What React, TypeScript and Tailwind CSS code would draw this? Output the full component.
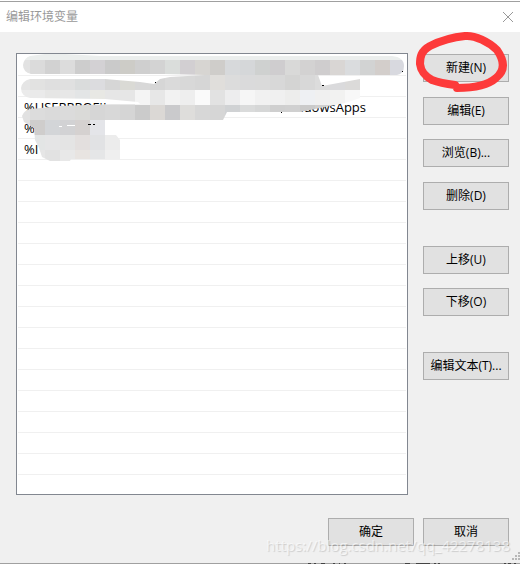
import React from 'react';
import { clsx } from 'clsx';

const uiFont = "font-['Open_Sans','Noto_Sans_CJK_SC',sans-serif]";

const rows = [
  { start: '', end: '' },
  { start: '', end: '' },
  { start: '%USERPROFIL', end: '\\WindowsApps' },
  { start: '%S', end: '' },
  { start: '%I', end: '' },
];

const actions = [
  { label: '新建(N)', gap: '', marked: true },
  { label: '编辑(E)', gap: 'mt-[15px]' },
  { label: '浏览(B)...', gap: 'mt-[14px]' },
  { label: '删除(D)', gap: 'mt-[15px]' },
  { label: '上移(U)', gap: 'mt-9' },
  { label: '下移(O)', gap: 'mt-[14px]' },
  { label: '编辑文本(T)...', gap: 'mt-9' },
];

// Mosaic tiles, 15px squares, one string per line starting at x = 15
const mosaic = [
  { y: 60, tiles: 'e2e2e2 dbdbdb d2d2d2 dcdcdc cdcdcd d3d1d4 cacaca cdccc7 cfcfcf d3d3d3 dadddb d2cfd2 d7d5d2 cfcdca d7d9db d5d7d9 cfd1d0 cfcdcf d9d9d8 d3d2d2 cfcdce d9d6d4 dadcde d2d3d3 d3cecb d8d9df' },
  { y: 75, tiles: 'e5e5e5 e2e2e1 dfdfdf e0e0e0 dadcdc dcdcdf d6d6d6 dadad5 d8d8d8 d6d6d6 dadada d8d8d8 d6d6d6 e0dedb dcdcdc dadadb dadada d8d8d8 d4d4d3 d8d8d8 dcdcdc dadadc dbdad9' },
  { y: 90, tiles: 'ebebeb eaeaea e6e6e5 e7e7e7 e3e5e6 e8e8e4 e6e6e6 e6e6e6 f4f4f4 e7e7e7 f2f2f2 eeeeee fafafa e2e2e2 ededee f6f6f6 f1f1f1 f0f0f0 ededec eef0f3 f0f0f0 f2f2f1 f8f8f8' },
  { y: 105, tiles: 'e1e1e1 dcdcdc dadada dbdbdb dadad8 d6d6d6 d8d8d8 d5d5d5 cbcbcb dbd8d5 cacacc dedddb d7d7d7 d6d6d6 d0d2d4 dadbdb d6d7d7 cfcfcf d0d0d0 cacaca cfcfcf d8d8d8 e0e0e0' },
  { y: 120, tiles: 'e0e0e0 cfcdcc d3d5d8 d2d2d4 d5d1d0 e4e5e9' },
  { y: 135, tiles: 'e3e5e5 e3e5e5 e5e5e6 e4e4e4 e3dfde e1e2e4 ececec' },
  { y: 150, tiles: 'e6e6e6 e6e6e6 e2e2e2 e8e8e8 e8e4e1 e5e6e7 efefef' },
];

const Mosaic = () => (
  <svg className="absolute top-0 left-0" width="389" height="108" viewBox="17 54 389 108" shapeRendering="crispEdges" aria-hidden="true">
    <clipPath id="smear">
      <path d="M30 56 L45 54 H65 L100 56 H392 Q404 57 404 66 Q404 74 397 75 H205 L165 74 H45 L31 74 Q23 72 23 65 Q24 58 30 56Z" />
      <path d="M30 79 H105 L140 82 L154 84 L160 79 L170 77 L205 75 H318 L322 86 L360 79 V98 L345 103 L325 107 L300 112 H227 L223 120 H105 V135 H116 L120 140 V159 H71 L70 161 H50 L42 157 L39 148 L35 140 L34 128 L24 122 L22 116 Q24 110 31 109 L60 106 L112 104 L140 104 L138 102 L105 99 L30 98 Q21 96 21 88 Q22 81 30 79Z" />
    </clipPath>
    <g clipPath="url(#smear)">
      <rect x="15" y="45" width="391" height="15" fill="#ebeeed" />
      {mosaic.map((line) =>
        line.tiles.split(' ').map((color, i) => (
          <rect key={`${line.y}-${i}`} x={15 + i * 15} y={line.y} width="15" height="15" fill={`#${color}`} />
        )),
      )}
    </g>
    <path d="M59 126.5h3M67 125.5h8" stroke="#fff" />
    <path d="M88 124.5h3M93 124.5h2M155 82.5h1M322 85.5h2M402 71.5h1M281 112.5h1" stroke="#000" />
  </svg>
);

// Hand-drawn ring around the "new" button
const RedRing = () => (
  <svg className="pointer-events-none absolute -top-6 -left-2.5" width="100" height="64" viewBox="413 30 100 64" fill="none" stroke="#fd3a3a" strokeWidth="8" strokeLinecap="round" strokeLinejoin="round" aria-hidden="true">
    <path d="M457 88 C470 88 487 86 496 78 C506 70 504 60 497 50 C489 42 475 35 465 36 C454 37 440 41 430 46 C421 51 420 57 420 64 C421 72 425 76 432 80 C440 83 447 84 455 85" />
  </svg>
);

const DialogButton = ({ label, className }: { label: string; className?: string }) => (
  <button
    type="button"
    className={clsx('h-7 w-[86px] shrink-0 border border-[#adadad] bg-[#e1e1e1] text-xs whitespace-nowrap text-black', className)}
  >
    {label}
  </button>
);

const SizeGrip = () => (
  <svg className="absolute right-0 bottom-0.5" width="9" height="9" fill="#b8b8b8" aria-hidden="true">
    <path d="M7 0h2v2h-2zM4 3h2v2h-2zM7 3h2v2h-2zM1 6h2v2h-2zM4 6h2v2h-2zM7 6h2v2h-2z" />
  </svg>
);

// Slivers of the window behind, showing through the bottom edge
const WindowBehind = () => (
  <svg className="absolute right-0 -bottom-px" width="232" height="1" stroke="#444" aria-hidden="true">
    <path d="M20 .5h3M26 .5h2M33 .5h4M45 .5h2M51 .5h1M56 .5h2M117 .5h5M128 .5h14M146 .5h2M150 .5h2M216 .5h2M220 .5h3M226 .5h2" />
  </svg>
);

const App: React.FC = () => (
  <div className={clsx('relative border-b border-[#a0a0a0] bg-[#f0f0f0]', uiFont)}>
    <header className="mt-px flex h-[31px] items-center justify-between border-t border-[#a0a0a0] bg-white px-1.5">
      <h1 className="text-xs text-[#999999]">编辑环境变量</h1>
      <button type="button" aria-label="关闭">
        <svg width="12" height="12" viewBox="0 0 12 12" stroke="#999" fill="none">
          <path d="M1 1l10 10M11 1L1 11" />
        </svg>
      </button>
    </header>
    <main className="flex gap-[15px] pt-[21px] pr-[11px] pl-4">
      <ul className="relative h-[442px] grow border border-[#828790] bg-white px-px pt-px">
        {Array.from({ length: 20 }, (_, i) => (
          <li key={i} className="flex h-[21px] justify-between border-b border-[#f0f0f0] pr-10 pl-1.5 text-[13px] leading-[21px]">
            <span>{rows[i]?.start}</span>
            <span>{rows[i]?.end}</span>
          </li>
        ))}
        <Mosaic />
      </ul>
      <div className="flex flex-col pt-px">
        {actions.map((a) =>
          a.marked ? (
            <div key={a.label} className="relative flex">
              <DialogButton label={a.label} />
              <RedRing />
            </div>
          ) : (
            <DialogButton key={a.label} label={a.label} className={a.gap} />
          ),
        )}
      </div>
    </main>
    <footer className="flex justify-end gap-[9px] pt-[23px] pr-[11px] pb-[17px]">
      <DialogButton label="确定" />
      <DialogButton label="取消" />
    </footer>
    <p className="pointer-events-none absolute right-2.5 bottom-2 text-[15px] leading-5 text-white/60 [text-shadow:1px_1px_1px_rgb(0_0_0/0.15)]">
      https://blog.csdn.net/qq_42278138
    </p>
    <SizeGrip />
    <WindowBehind />
  </div>
);

export default App;
